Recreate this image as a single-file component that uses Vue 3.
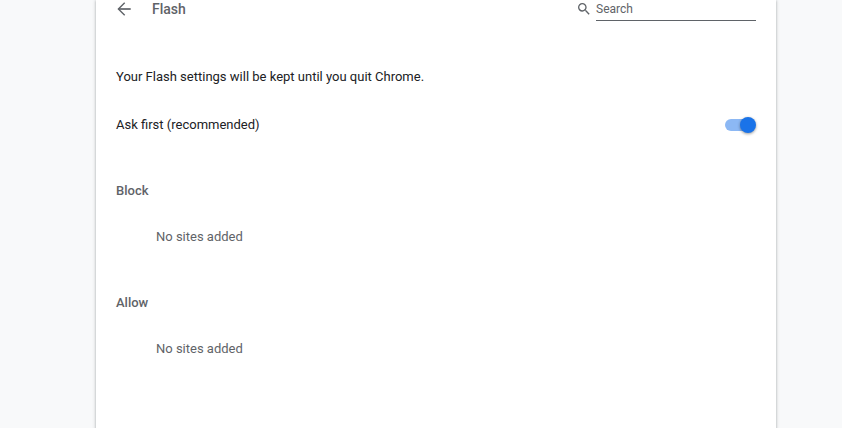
<template>
  <main class="page">
    <section class="card">
      <header class="toolbar">
        <button class="back" aria-label="Back">
          <svg viewBox="0 0 20 20" width="20" height="20">
            <path d="M10.7 3.7L4.4 10l6.3 6.3" stroke-width="1.4" />
            <path d="M4.6 10h12.1" stroke-width="1.7" />
          </svg>
        </button>
        <h1>Flash</h1>
        <div class="search">
          <svg viewBox="0 0 24 24" width="16" height="16">
            <path d="M15.5 14h-.79l-.28-.27A6.471 6.471 0 0 0 16 9.5 6.5 6.5 0 1 0 9.5 16c1.61 0 3.09-.59 4.23-1.57l.27.28v.79l5 4.99L20.49 19l-4.99-5zm-6 0C7.01 14 5 11.99 5 9.5S7.01 5 9.5 5 14 7.01 14 9.5 11.99 14 9.5 14z" />
          </svg>
          <span class="search-field">Search</span>
        </div>
      </header>

      <p class="notice">Your Flash settings will be kept until you quit Chrome.</p>

      <div class="row">
        <span>Ask first (recommended)</span>
        <button
          class="toggle"
          :class="{ on: askFirst }"
          role="switch"
          :aria-checked="askFirst"
          aria-label="Ask first (recommended)"
          @click="askFirst = !askFirst"
        >
          <span class="knob"></span>
        </button>
      </div>

      <div v-for="list in siteLists" :key="list.title" class="site-list">
        <h2>{{ list.title }}</h2>
        <p v-if="!list.sites.length">No sites added</p>
        <p v-for="site in list.sites" :key="site">{{ site }}</p>
      </div>
    </section>
  </main>
</template>

<script setup>
import { ref } from 'vue';

const askFirst = ref(true);

const siteLists = [
  { title: 'Block', sites: [] },
  { title: 'Allow', sites: [] }
];
</script>

<style>
body {
  background: #f8f9fa;
  overflow: hidden;
}
</style>

<style scoped>
.page {
  height: 428px;
  overflow: hidden;
  padding: 0 66px 0 96px;
  box-sizing: border-box;
  font-family: Roboto, sans-serif;
  font-size: 13px;
  color: #202124;
}

.card {
  width: 680px;
  height: 440px;
  box-sizing: border-box;
  padding: 0 20px;
  background: #fff;
  box-shadow: 0 1px 2px 0 rgba(60, 64, 67, 0.3), 0 1px 3px 1px rgba(60, 64, 67, 0.15);
}

.toolbar {
  display: flex;
  align-items: flex-start;
  height: 53px;
  color: #5f6368;
}

button {
  border: 0;
  padding: 0;
  background: none;
  cursor: pointer;
}

svg {
  display: block;
  flex: none;
  fill: #5f6368;
}

.back {
  margin: -1px 18px 0 -2px;
}

.back svg {
  fill: none;
  stroke: #5f6368;
}

h1 {
  flex: 1;
  margin: 0;
  font-size: 14px;
  line-height: 18px;
  font-weight: 500;
}

.search {
  display: flex;
  width: 180px;
}

.search svg {
  margin-top: 1px;
}

.search-field {
  flex: 1;
  height: 20px;
  margin-left: 4px;
  border-bottom: 1px solid #5f6368;
  font-size: 12px;
  line-height: 18px;
}

.notice {
  margin: 0;
  line-height: 48px;
}

.row {
  display: flex;
  align-items: center;
  justify-content: space-between;
  height: 48px;
}

.row > span {
  line-height: 16px;
}

.toggle {
  display: flex;
  align-items: center;
  width: 28px;
  height: 12px;
  margin-right: 3px;
  border-radius: 6px;
  background: #bdc1c6;
}

.knob {
  flex: none;
  width: 16px;
  height: 16px;
  border-radius: 50%;
  background: #fff;
  box-shadow: 0 1px 3px rgba(0, 0, 0, 0.4);
}

.on {
  background: #8cb8f4;
}

.on .knob {
  margin-left: 15px;
  background: #1a73e8;
}

.site-list {
  height: 112px;
}

.row + .site-list {
  margin-top: 18px;
}

h2 {
  margin: 0;
  font-size: 13px;
  line-height: 48px;
  font-weight: 500;
  color: #5f6368;
}

.site-list p {
  margin: 0;
  padding-left: 40px;
  line-height: 44px;
  color: #5f6368;
}
</style>
